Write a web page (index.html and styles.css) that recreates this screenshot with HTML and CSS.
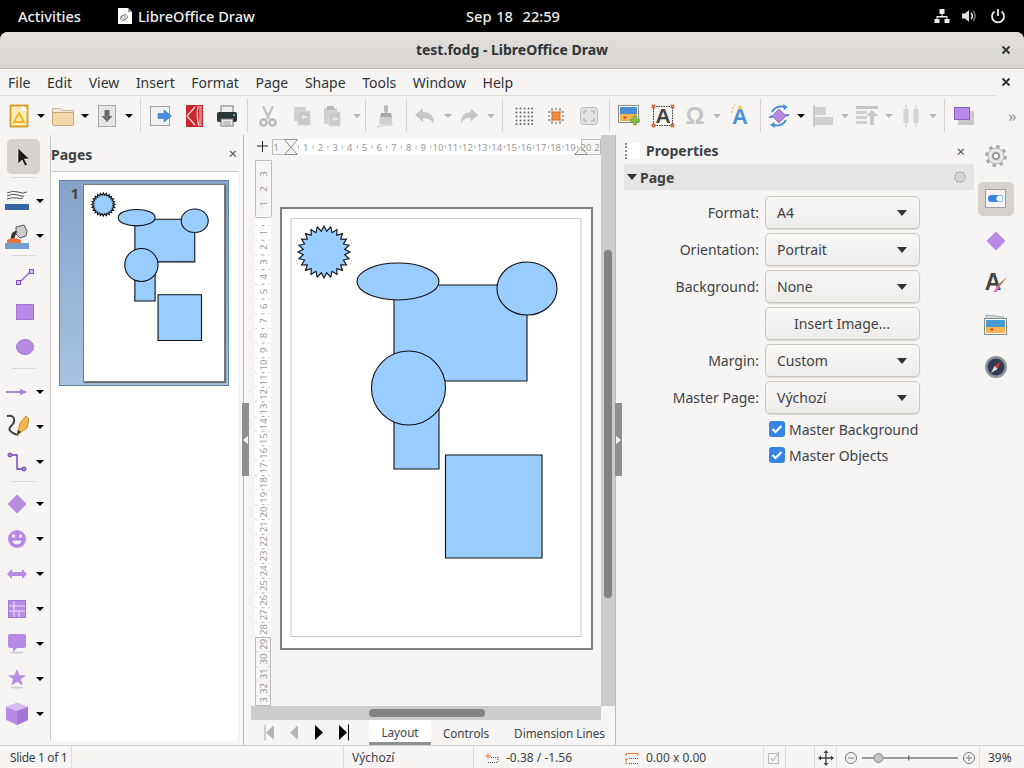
FILE: index.html
```html
<!DOCTYPE html>
<html lang="en">
<head>
<meta charset="utf-8">
<title>test.fodg - LibreOffice Draw</title>
<link rel="stylesheet" href="styles.css">
</head>
<body>
<header class="topbar">
  <div class="top-left">
    <span class="activities">Activities</span>
    <span class="appname">
      <svg width="16" height="18" viewBox="0 0 16 18"><path d="M1 1h10l4 4v12H1z" fill="#fff"/><path d="M11 1l4 4h-4z" fill="#999"/><path d="M4 10l4-3 3 3-3 3z" fill="none" stroke="#888"/><circle cx="6" cy="11" r="2.5" fill="none" stroke="#888"/></svg>
      LibreOffice Draw
    </span>
  </div>
  <div class="clock">Sep 18&nbsp; 22:59</div>
  <div class="tray">
    <svg width="16" height="16" viewBox="0 0 16 16"><path d="M5.500 1h5v5h-2v2h5v3h2v4h-5v-4h2V9.500h-9V11h2v4h-5v-4h2V8h5V6h-2z" fill="#eee"/></svg>
    <svg width="16" height="16" viewBox="0 0 16 16"><path d="M1 5.500h3L8 2v12l-4-3.500H1z" fill="#ddd"/><path d="M10 5a4 4 0 0 1 0 6" fill="none" stroke="#eee" stroke-width="1.500"/><path d="M12 3a7 7 0 0 1 0 10" fill="none" stroke="#777" stroke-width="1.500"/></svg>
    <svg width="16" height="16" viewBox="0 0 16 16"><path d="M8 1v7" stroke="#eee" stroke-width="1.800"/><path d="M4.500 3.500a6 6 0 1 0 7 0" fill="none" stroke="#eee" stroke-width="1.800"/></svg>
  </div>
</header>

<div class="window">
  <div class="titlebar">
    <span class="title">test.fodg - LibreOffice Draw</span>
    <svg class="x-btn" width="10" height="10" viewBox="0 0 10 10"><path d="M1.500 1.500l7 7M8.500 1.500l-7 7" stroke="#2e3436" stroke-width="1.800"/></svg>
  </div>

  <div class="menubar">
    <nav class="menu">
      <span>File</span><span>Edit</span><span>View</span><span>Insert</span><span>Format</span><span>Page</span><span>Shape</span><span>Tools</span><span>Window</span><span>Help</span>
    </nav>
    <svg class="x-btn" width="10" height="10" viewBox="0 0 10 10"><path d="M1.500 1.500l7 7M8.500 1.500l-7 7" stroke="#2e3436" stroke-width="1.800"/></svg>
  </div>

  <div class="toolbar">
    <div class="tb w22"><svg width="20" height="24" viewBox="0 0 20 24"><path d="M1.500 1.500h17v21h-17z" fill="#fdeeb8" stroke="#d89b2b" stroke-width="1.800"/><path d="M13 1.500l5.500 5.500h-5.500z" fill="#fff"/><path d="M10 9l5 9H5z" fill="none" stroke="#f4b01f" stroke-width="1.800"/></svg></div>
    <div class="ar w22"></div>
    <div class="tb w22"><svg width="24" height="20" viewBox="0 0 24 20"><path d="M1.500 18V2.500h8l2 2h11V18z" fill="#efe6d4" stroke="#c8b89c"/><path d="M1.500 6.500h21V18q0 1.500-1.500 1.500H3q-1.500 0-1.500-1.500z" fill="#f2d7ab" stroke="#c9a87c"/></svg></div>
    <div class="ar w22"></div>
    <div class="tb w22"><svg width="20" height="24" viewBox="0 0 20 24"><rect x="1.500" y="1.500" width="17" height="21" fill="#e6e6e6" stroke="#a8a8a8"/><path d="M7.500 6h5v6h3l-5.500 6-5.500-6h3z" fill="#6d6d6d"/></svg></div>
    <div class="ar w22"></div>
    <i class="sep"></i>
    <div class="tb w40"><svg width="24" height="22" viewBox="0 0 24 22"><rect x="1.500" y="1.500" width="19" height="19" fill="#eef0f2" stroke="#a0a0a0"/><path d="M9 8.500h6V5l7.500 6-7.500 6v-3.500H9z" fill="#4a90d9" stroke="#3476bb" stroke-width=".6"/></svg></div>
    <div class="tb w26"><svg width="17" height="22" viewBox="0 0 17 22"><rect width="17" height="22" fill="#c9272e"/><path d="M1 11L9 2M1 11l8 9M12 1q-2 10 1 20" fill="none" stroke="#f4e4e4" stroke-width="1.200"/><rect x="13" y="1" width="3" height="20" fill="#dc7c80"/></svg></div>
    <div class="tb w40"><svg width="22" height="22" viewBox="0 0 22 22"><rect x="5" y="1" width="12" height="7" fill="#f0f0f0" stroke="#777"/><rect x="1" y="7" width="20" height="10" rx="2" fill="#2e3436"/><rect x="5" y="14" width="12" height="7" fill="#eee" stroke="#777"/><rect x="17" y="9" width="2" height="2" fill="#3ab4e0"/><path d="M7 17h8M7 19h8" stroke="#999"/></svg></div>
    <i class="sep"></i>
    <div class="tb w40"><svg width="18" height="22" viewBox="0 0 18 22"><path d="M4 1l6 13M14 1L8 14" stroke="#c2c2c2" stroke-width="2.400"/><circle cx="4.500" cy="17.500" r="3.200" fill="none" stroke="#b5b5b5" stroke-width="2.200"/><circle cx="13.500" cy="17.500" r="3.200" fill="none" stroke="#b5b5b5" stroke-width="2.200"/></svg></div>
    <div class="tb w28"><svg width="18" height="20" viewBox="0 0 18 20"><rect x="1" y="1" width="12" height="14" fill="#d0d0d0"/><rect x="5" y="5" width="12" height="14" fill="#c8c8c8" stroke="#d8d8d8"/><path d="M8 11l3-3v2h3v2h-3v2z" fill="#e6e6e6"/></svg></div>
    <div class="tb w32"><svg width="18" height="22" viewBox="0 0 18 22"><rect x="1" y="3" width="13" height="16" rx="1" fill="#d0d0d0"/><rect x="4" y="1" width="7" height="4" fill="#b8b8b8"/><rect x="6" y="7" width="11" height="14" fill="#c8c8c8" stroke="#dadada"/><path d="M9 14l3-3v2h3v2h-3v2z" fill="#e6e6e6"/></svg></div>
    <div class="ar dis w17"></div>
    <i class="sep"></i>
    <div class="tb w40"><svg width="20" height="24" viewBox="0 0 20 24"><rect x="8" y="1" width="4" height="8" rx="2" fill="#bdbdbd"/><path d="M5 9h10l1 4H4z" fill="#a8a8a8"/><path d="M4 13h12v7H3z" fill="#cfcfcf"/><path d="M1 23q8-3 16-2" fill="none" stroke="#d8d8d8" stroke-width="2"/></svg></div>
    <i class="sep"></i>
    <div class="tb w36"><svg width="22" height="18" viewBox="0 0 22 18"><path d="M1 8L9 1v4q11 0 11 12q-3-6-11-6v4z" fill="#c6c6c6"/></svg></div>
    <div class="ar dis w10"></div>
    <div class="tb w32"><svg width="20" height="18" viewBox="0 0 22 18"><path d="M21 8L13 1v4Q2 5 2 17q3-6 11-6v4z" fill="#c6c6c6"/></svg></div>
    <div class="ar dis w12"></div>
    <i class="gap5"></i>
    <i class="sep"></i>
    <div class="tb w41"><svg width="18" height="18" viewBox="0 0 18 18"><g fill="#666"><circle cx="1.500" cy="1.500" r="1"/><circle cx="5.500" cy="1.500" r="1"/><circle cx="9.500" cy="1.500" r="1"/><circle cx="13.500" cy="1.500" r="1"/><circle cx="17" cy="1.500" r="1"/><circle cx="1.500" cy="5.500" r="1"/><circle cx="5.500" cy="5.500" r="1"/><circle cx="9.500" cy="5.500" r="1"/><circle cx="13.500" cy="5.500" r="1"/><circle cx="17" cy="5.500" r="1"/><circle cx="1.500" cy="9.500" r="1"/><circle cx="5.500" cy="9.500" r="1"/><circle cx="9.500" cy="9.500" r="1"/><circle cx="13.500" cy="9.500" r="1"/><circle cx="17" cy="9.500" r="1"/><circle cx="1.500" cy="13.500" r="1"/><circle cx="5.500" cy="13.500" r="1"/><circle cx="9.500" cy="13.500" r="1"/><circle cx="13.500" cy="13.500" r="1"/><circle cx="17" cy="13.500" r="1"/><circle cx="1.500" cy="17" r="1"/><circle cx="5.500" cy="17" r="1"/><circle cx="9.500" cy="17" r="1"/><circle cx="13.500" cy="17" r="1"/><circle cx="17" cy="17" r="1"/></g></svg></div>
    <div class="tb w24"><svg width="18" height="18" viewBox="0 0 18 18"><path d="M5 1v3M9 1v2M13 1v3M1 5h3M1 9h2M1 13h3M5 14v3M9 15v2M13 14v3M14 5h3M15 9h2M14 13h3" stroke="#666"/><rect x="5" y="5" width="8" height="8" fill="#f08a3c" stroke="#d26a20"/></svg></div>
    <div class="tb w41"><svg width="18" height="18" viewBox="0 0 18 18"><rect x=".5" y=".5" width="17" height="17" rx="3" fill="#e4e4e4" stroke="#bdbdbd"/><path d="M4 7V4h3M11 4h3v3M14 11v3h-3M7 14H4v-3" fill="none" stroke="#a8a8a8" stroke-width="1.200"/></svg></div>
    <i class="sep"></i>
    <div class="tb w40"><svg width="24" height="22" viewBox="0 0 24 22"><rect x=".5" y=".5" width="20" height="17" fill="#fff" stroke="#8a8a8a"/><rect x="2" y="2" width="17" height="7" fill="#4a8cd6"/><rect x="2" y="9" width="17" height="7" fill="#f2b552"/><path d="M7 11v3M5.500 12.500h3" stroke="#d33"/><path d="M15.500 11h3v3h3v3h-3v3h-3v-3h-3v-3h3z" fill="#86c24a" stroke="#5f9a2b" stroke-width=".6"/></svg></div>
    <div class="tb w26"><svg class="svgtext" width="24" height="24" viewBox="0 0 24 24"><rect x="2.500" y="2.500" width="19" height="19" fill="none" stroke="#333" stroke-dasharray="1.500 1"/><text x="12" y="19" class="ic-a" text-anchor="middle">A</text><g fill="#e87a45" stroke="#b8532a" stroke-width=".6"><rect x="1" y="1" width="3" height="3"/><rect x="20" y="1" width="3" height="3"/><rect x="1" y="20" width="3" height="3"/><rect x="20" y="20" width="3" height="3"/></g></svg></div>
    <div class="tb w37"><svg class="svgtext" width="24" height="30" viewBox="0 0 24 30"><text x="12" y="23" class="ic-omega" text-anchor="middle">Ω</text></svg></div>
    <div class="ar dis w8"></div>
    <div class="tb w36"><svg class="svgtext" width="22" height="28" viewBox="0 0 22 28"><text x="12" y="22" class="ic-fw" text-anchor="middle">A</text><path d="M12 3l1 2 2 .5-2 1-1 2-1-2-2-1 2-.5z" fill="#f2c230"/><path d="M4 6h2M3 10h2M6 3h1" stroke="#d9a520" stroke-width="1.200"/></svg></div>
    <i class="gap3"></i>
    <i class="sep"></i>
    <div class="tb w36"><svg width="24" height="24" viewBox="0 0 24 24"><path d="M12 5l7 7-7 7-7-7z" fill="#b78ae6" stroke="#9a6fd0"/><path d="M5 8q4-7 13-5" fill="none" stroke="#4a90d9" stroke-width="2"/><path d="M19 16q-4 7-13 5" fill="none" stroke="#4a90d9" stroke-width="2"/><path d="M16 0l5 3-4 3zM8 24l-5-3 4-3z" fill="#4a90d9"/><path d="M1 14l3-3 2 3zM23 10l-3 3-2-3z" fill="#4a90d9"/></svg></div>
    <div class="ar w8"></div>
    <div class="tb w36"><svg width="20" height="22" viewBox="0 0 20 22"><rect y="0" width="2" height="22" fill="#c8c8c8"/><rect x="2" y="2" width="11" height="8" fill="#d0d0d0"/><rect x="2" y="12" width="18" height="8" fill="#d0d0d0"/></svg></div>
    <div class="ar dis w8"></div>
    <div class="tb w36"><svg width="22" height="20" viewBox="0 0 22 20"><rect width="22" height="3" fill="#c4c4c4"/><path d="M0 5h11v3H0zM0 10h11v3H0zM0 15h11v3H0z" fill="#d0d0d0"/><path d="M16 4l6 6h-4v9h-4v-9h-4z" fill="#c8c8c8"/></svg></div>
    <div class="ar dis w8"></div>
    <div class="tb w36"><svg width="16" height="22" viewBox="0 0 16 22"><path d="M3 0v22M13 0v22" stroke="#c8c8c8"/><rect x="0.500" y="4" width="5" height="14" fill="#d4d4d4"/><rect x="10.500" y="4" width="5" height="14" fill="#d4d4d4"/></svg></div>
    <div class="ar dis w8"></div>
    <i class="gap7"></i>
    <i class="sep"></i>
    <div class="tb w38"><svg width="20" height="18" viewBox="0 0 20 18"><rect x="4" y="4" width="16" height="14" fill="#c8c8c8"/><rect x=".5" y=".5" width="15" height="12" fill="#b78ae6" stroke="#8a60c8"/></svg></div>
    <div class="more">»</div>
  </div>

  <main class="main">
    <aside class="leftbar">
      <div class="lt mid active"><svg width="14" height="20" viewBox="0 0 14 20"><path d="M2 1v16l4-4 3 6 2.500-1-3-6h5z" fill="#1a1a1a" stroke="#fff" stroke-width=".6"/></svg></div>
      <i class="hsep s1"></i>
      <div class="lt"><span class="lt-ic"><svg width="24" height="21" viewBox="0 0 24 21"><path d="M2 3q6-3 11-1t9 0M2 6q6-3 11-1t6 1M2 9q6-2 10-1t6 0" fill="none" stroke="#444" stroke-width=".9"/><rect y="14" width="24" height="6" fill="#3465a4"/></svg></span><span class="ar"></span></div>
      <div class="lt"><span class="lt-ic"><svg width="24" height="26" viewBox="0 0 24 26"><path d="M11 4l8-2 3 6-1 5-6 2-4-4z" fill="#ccc" stroke="#555"/><path d="M12 8q-5 0-6 5t2 6" fill="#333"/><path d="M2 17q6-4 14 0v3H2z" fill="#e8743c"/><rect y="20" width="24" height="6" fill="#729fcf"/></svg></span><span class="ar"></span></div>
      <i class="hsep s2"></i>
      <div class="lt mid"><svg width="20" height="20" viewBox="0 0 20 20"><path d="M4 16L16 4" stroke="#8b5fcb" stroke-width="1.300"/><rect x="1.500" y="13.500" width="4" height="4" fill="#d6bdf2" stroke="#7d4fc4"/><rect x="14.500" y="2.500" width="4" height="4" fill="#d6bdf2" stroke="#7d4fc4"/></svg></div>
      <div class="lt mid"><svg width="18" height="16" viewBox="0 0 18 16"><rect x=".5" y=".5" width="17" height="15" fill="#b78ae6" stroke="#a277d8"/></svg></div>
      <div class="lt mid"><svg width="18" height="16" viewBox="0 0 18 16"><ellipse cx="9" cy="8" rx="8.500" ry="7.500" fill="#b78ae6" stroke="#a277d8"/></svg></div>
      <i class="hsep s3"></i>
      <div class="lt"><span class="lt-ic"><svg width="22" height="8" viewBox="0 0 22 8"><path d="M0 4h15" stroke="#7a3fc0" stroke-width="1.200"/><path d="M14 1l7 3-7 3z" fill="#a985d8"/></svg></span><span class="ar"></span></div>
      <div class="lt"><span class="lt-ic"><svg width="24" height="26" viewBox="0 0 24 26"><path d="M2 2q6-1 7 3t-3 7q-4 4 2 7t4 1" fill="none" stroke="#444" stroke-width="2"/><path d="M12 21l3-12 6-7 3 3-2 9z" fill="#f2b552" stroke="#c98a26"/><path d="M12 21l1-5 3 2z" fill="#333"/></svg></span><span class="ar"></span></div>
      <div class="lt"><span class="lt-ic"><svg width="20" height="20" viewBox="0 0 20 20"><path d="M3 3h7v14h7" fill="none" stroke="#6f3fb8" stroke-width="1.400"/><circle cx="3" cy="3" r="2" fill="#a985d8" stroke="#6f3fb8"/><circle cx="17" cy="17" r="2" fill="#a985d8" stroke="#6f3fb8"/></svg></span><span class="ar"></span></div>
      <i class="hsep s4"></i>
      <div class="lt"><span class="lt-ic"><svg width="20" height="20" viewBox="0 0 20 20"><path d="M10 .5L19.500 10 10 19.500.5 10z" fill="#b78ae6"/></svg></span><span class="ar"></span></div>
      <div class="lt"><span class="lt-ic"><svg width="20" height="20" viewBox="0 0 20 20"><circle cx="10" cy="10" r="9" fill="#b78ae6"/><circle cx="6.500" cy="7" r="1.700" fill="#f3ecfb"/><circle cx="13.500" cy="7" r="1.700" fill="#f3ecfb"/><path d="M4.500 11h11q-1 5-5.500 5t-5.500-5z" fill="#f3ecfb" stroke="#7d4fc4" stroke-width=".6"/></svg></span><span class="ar"></span></div>
      <div class="lt"><span class="lt-ic"><svg width="20" height="12" viewBox="0 0 20 12"><path d="M0 6l5-5v3h10V1l5 5-5 5V8H5v3z" fill="#b78ae6"/></svg></span><span class="ar"></span></div>
      <div class="lt"><span class="lt-ic"><svg width="18" height="18" viewBox="0 0 18 18"><rect width="18" height="18" fill="#b78ae6"/><path d="M.5 6h17M.5 11h17M6 .5V18M11 11v7" stroke="#efe5fa"/><rect x=".5" y=".5" width="17" height="17" fill="none" stroke="#a277d8"/></svg></span><span class="ar"></span></div>
      <div class="lt"><span class="lt-ic"><svg width="18" height="20" viewBox="0 0 18 20"><path d="M2 0h14q2 0 2 2v10q0 2-2 2H9l-4 4v-4H2q-2 0-2-2V2q0-2 2-2z" fill="#b78ae6"/><ellipse cx="9" cy="18.500" rx="7" ry="1" fill="#ccc"/></svg></span><span class="ar"></span></div>
      <div class="lt"><span class="lt-ic"><svg width="18" height="20" viewBox="0 0 18 20"><path d="M9 0l2.500 6.200H18l-5.200 4 2 6.300L9 12.800 3.200 16.500l2-6.300L0 6.200h6.500z" fill="#b78ae6"/><ellipse cx="9" cy="18.500" rx="6" ry="1" fill="#ccc"/></svg></span><span class="ar"></span></div>
      <div class="lt"><span class="lt-ic"><svg width="22" height="22" viewBox="0 0 22 22"><path d="M11 0l11 4v13l-11 5L0 17V4z" fill="#b78ae6"/><path d="M11 0l11 4-11 4L0 4z" fill="#d6bdf2"/><path d="M11 8l11-4v13l-11 5z" fill="#a277d8"/></svg></span><span class="ar"></span></div>
    </aside>

    <section class="pages">
      <div class="panel-head"><span class="panel-title">Pages</span><span class="close">×</span></div>
      <div class="page-list">
        <div class="slide">
          <span class="slide-no">1</span>
          <svg class="thumb" viewBox="0 0 311 441" preserveAspectRatio="none">
            <defs>
              <symbol id="drawing" viewBox="0 0 311 441" preserveAspectRatio="none">
                <g class="shapes">
                  <polygon transform="translate(43 44)" points="26,0 20.8,2.74 25.1,6.73 19.4,8.04 22.5,13 16.66,12.78 18.38,18.38 12.78,16.66 13,22.5 8.04,19.4 6.73,25.1 2.74,20.8 0,26 -2.74,20.8 -6.73,25.1 -8.04,19.4 -13,22.5 -12.78,16.66 -18.38,18.38 -16.66,12.78 -22.5,13 -19.4,8.04 -25.1,6.73 -20.8,2.74 -26,0 -20.8,-2.74 -25.1,-6.73 -19.4,-8.04 -22.5,-13 -16.66,-12.78 -18.38,-18.38 -12.78,-16.66 -13,-22.5 -8.04,-19.4 -6.73,-25.1 -2.74,-20.8 0,-26 2.74,-20.8 6.73,-25.1 8.04,-19.4 13,-22.5 12.78,-16.66 18.38,-18.38 16.66,-12.78 22.5,-13 19.4,-8.04 25.1,-6.73 20.8,-2.74"/>
                  <polygon points="113,77 246,77 246,173 158,173 158,261 113,261"/>
                  <ellipse cx="117" cy="73.500" rx="41" ry="18.500"/>
                  <ellipse cx="246" cy="80.500" rx="30" ry="26.500"/>
                  <circle cx="127.500" cy="180" r="37"/>
                  <rect x="164.500" y="247" width="96.500" height="103"/>
                </g>
              </symbol>
            </defs>
            <use href="#drawing" width="311" height="441"/>
          </svg>
        </div>
      </div>
    </section>

    <section class="center">
      <div class="workspace">
        <svg class="canvas" width="350" height="571" viewBox="251 135 350 571">
          <!-- ruler corner -->
          <path d="M257 146h11M262.500 141v11" stroke="#222"/>
          <!-- horizontal ruler -->
          <rect x="297" y="139" width="284" height="16" fill="#fff"/>
          <path d="M272.500 139.500h19v15h-19zM581.500 139.500h19v15h-19z" fill="#f6f5f4" stroke="#bcbcbc"/>
          <path d="M284.500 139.500h13l-6.500 8 6.500 7h-13l6.500-7z" fill="#f6f5f4" stroke="#8f8f8f"/>
          <path d="M574.500 154.500l6.500-7 6.500 7z" fill="#f6f5f4" stroke="#8f8f8f"/>
          <line x1="298" y1="147" x2="580" y2="147" stroke="#aaa" stroke-width="3" stroke-dasharray="1 13.700"/>
          <g class="ruler-h">
            <text x="276" y="151">1</text><text x="305.700" y="151">1</text><text x="320.400" y="151">2</text><text x="335.100" y="151">3</text><text x="349.800" y="151">4</text><text x="364.500" y="151">5</text><text x="379.200" y="151">6</text><text x="393.900" y="151">7</text><text x="408.600" y="151">8</text><text x="423.300" y="151">9</text><text x="438" y="151">10</text><text x="452.700" y="151">11</text><text x="467.400" y="151">12</text><text x="482.100" y="151">13</text><text x="496.800" y="151">14</text><text x="511.500" y="151">15</text><text x="526.200" y="151">16</text><text x="540.900" y="151">17</text><text x="555.600" y="151">18</text><text x="570.300" y="151">19</text><text x="586" y="151">20</text><text x="597" y="151">2</text>
          </g>
          <!-- vertical ruler -->
          <rect x="255" y="218" width="16" height="419" fill="#fff"/>
          <path d="M255.500 160.500h16v55q0 2-2 2h-12q-2 0-2-2zM255.500 637.500h15v68h-15z" fill="#f6f5f4" stroke="#bcbcbc"/>
          <line x1="263" y1="225" x2="263" y2="637" stroke="#aaa" stroke-width="3" stroke-dasharray="1 13.700"/>
          <line x1="256" y1="225" x2="256" y2="705" stroke="#aaa" stroke-dasharray="1 13.700"/>
          <line x1="269" y1="225" x2="269" y2="705" stroke="#aaa" stroke-dasharray="1 13.700"/>
          <g class="ruler-v">
            <text transform="translate(263 174) rotate(-90)">3</text><text transform="translate(263 189) rotate(-90)">2</text><text transform="translate(263 203.500) rotate(-90)">1</text>
            <text transform="translate(263 232.700) rotate(-90)">1</text><text transform="translate(263 247.400) rotate(-90)">2</text><text transform="translate(263 262.100) rotate(-90)">3</text><text transform="translate(263 276.800) rotate(-90)">4</text><text transform="translate(263 291.500) rotate(-90)">5</text><text transform="translate(263 306.200) rotate(-90)">6</text><text transform="translate(263 320.900) rotate(-90)">7</text><text transform="translate(263 335.600) rotate(-90)">8</text><text transform="translate(263 350.300) rotate(-90)">9</text><text transform="translate(263 365) rotate(-90)">10</text><text transform="translate(263 379.700) rotate(-90)">11</text><text transform="translate(263 394.400) rotate(-90)">12</text><text transform="translate(263 409.100) rotate(-90)">13</text><text transform="translate(263 423.800) rotate(-90)">14</text><text transform="translate(263 438.500) rotate(-90)">15</text><text transform="translate(263 453.200) rotate(-90)">16</text><text transform="translate(263 467.900) rotate(-90)">17</text><text transform="translate(263 482.600) rotate(-90)">18</text><text transform="translate(263 497.300) rotate(-90)">19</text><text transform="translate(263 512) rotate(-90)">20</text><text transform="translate(263 526.700) rotate(-90)">21</text><text transform="translate(263 541.400) rotate(-90)">22</text><text transform="translate(263 556.100) rotate(-90)">23</text><text transform="translate(263 570.800) rotate(-90)">24</text><text transform="translate(263 585.500) rotate(-90)">25</text><text transform="translate(263 600.200) rotate(-90)">26</text><text transform="translate(263 614.900) rotate(-90)">27</text><text transform="translate(263 629.600) rotate(-90)">28</text><text transform="translate(263 644.300) rotate(-90)">29</text><text transform="translate(263 659) rotate(-90)">30</text><text transform="translate(263 673.700) rotate(-90)">31</text><text transform="translate(263 688.400) rotate(-90)">32</text><text transform="translate(263 700) rotate(-90)">3</text>
          </g>
          <!-- page -->
          <rect x="281" y="208" width="311" height="441" fill="#fff" stroke="#7f7f7f" stroke-width="2"/>
          <rect x="291" y="218.500" width="290" height="418" fill="none" stroke="#c8c8c8"/>
          <use href="#drawing" x="281" y="208" width="311" height="441"/>
        </svg>
        <div class="vscroll"><div class="sthumb"></div></div>
      </div>
      <div class="hrow">
        <div class="hscroll"><div class="sthumb"></div></div>
      </div>
      <div class="tabs">
        <div class="tabnav">
          <svg width="125" height="25" viewBox="244 720 125 25">
            <path d="M265 724.500v16" stroke="#aaa"/><path d="M274 725v15l-8-7.500z" fill="#b5b5b5"/>
            <path d="M298 725v15l-8-7.500z" fill="#b5b5b5"/>
            <path d="M315 725v15l8-7.500z" fill="#000"/>
            <path d="M339 725v15l8-7.500z" fill="#000"/><path d="M348.500 724.500v16" stroke="#000"/>
          </svg>
        </div>
        <span class="tab on">Layout</span>
        <span class="tab t2">Controls</span>
        <span class="tab t3">Dimension Lines</span>
      </div>
    </section>

    <section class="props">
      <div class="props-head">
        <span class="grip"></span>
        <span class="panel-title">Properties</span>
        <span class="close">×</span>
      </div>
      <div class="deck">
        <i class="deck-caret"></i><span class="deck-title">Page</span>
        <svg width="14" height="14" viewBox="0 0 14 14"><circle cx="7" cy="7" r="5" fill="#e6e5e3" stroke="#b5b5b5" stroke-width="2" stroke-dasharray="2 1.150"/><circle cx="7" cy="7" r="4.300" fill="#e0dfdd" stroke="#bbb"/><circle cx="7" cy="7" r="1.500" fill="#f0f0f0" stroke="#bbb"/></svg>
      </div>
      <div class="form">
        <label>Format:</label><div class="sel"><span>A4</span><i class="caret"></i></div>
        <label>Orientation:</label><div class="sel"><span>Portrait</span><i class="caret"></i></div>
        <label>Background:</label><div class="sel"><span>None</span><i class="caret"></i></div>
        <label></label><div class="sel btn">Insert Image...</div>
        <label>Margin:</label><div class="sel"><span>Custom</span><i class="caret"></i></div>
        <label>Master Page:</label><div class="sel"><span>Výchozí</span><i class="caret"></i></div>
        <div class="checks">
          <div class="check"><svg width="16" height="16" viewBox="0 0 16 16"><rect width="16" height="16" rx="3" fill="#3584e4"/><path d="M3.500 8l3 3 6-6" fill="none" stroke="#fff" stroke-width="2.200"/></svg>Master Background</div>
          <div class="check"><svg width="16" height="16" viewBox="0 0 16 16"><rect width="16" height="16" rx="3" fill="#3584e4"/><path d="M3.500 8l3 3 6-6" fill="none" stroke="#fff" stroke-width="2.200"/></svg>Master Objects</div>
        </div>
      </div>
    </section>

    <aside class="sidetabs">
      <div class="st"><svg width="24" height="24" viewBox="0 0 24 24"><circle cx="12" cy="12" r="9.500" fill="none" stroke="#aaa" stroke-width="3" stroke-dasharray="3.500 3.960"/><circle cx="12" cy="12" r="8" fill="#e8e8e8" stroke="#b0b0b0"/><circle cx="12" cy="12" r="3.200" fill="#f8f8f8" stroke="#999" stroke-width="2"/></svg></div>
      <div class="st active"><svg width="22" height="20" viewBox="0 0 22 20"><rect x=".5" y=".5" width="20" height="18" fill="#f3f3f3" stroke="#a0a0a0"/><rect x="3" y="6" width="15" height="7" rx="3.500" fill="#3584e4"/><circle cx="14.500" cy="9.500" r="3" fill="#fff"/></svg></div>
      <div class="st"><svg width="20" height="20" viewBox="0 0 20 20"><path d="M10 .5L19.500 10 10 19.500.5 10z" fill="#b78ae6"/></svg></div>
      <div class="st"><svg class="svgtext" width="24" height="30" viewBox="0 0 24 30"><text x="9" y="22" class="ic-side" text-anchor="middle">A</text><path d="M23 9l-7 9-2-1.500z" fill="#b8742a"/><path d="M14 17l2 1.500-3 5q-2 1-4 .5 3-3 5-7z" fill="#d96fc0"/></svg></div>
      <div class="st"><svg width="24" height="22" viewBox="0 0 24 22"><path d="M2 1l18 2v3H2z" fill="#cfe0f0" stroke="#9aa"/><rect x=".5" y="4.500" width="22" height="16" fill="#fff" stroke="#888"/><rect x="2" y="6" width="19" height="7" fill="#4a9ad6"/><rect x="2" y="13" width="19" height="6" fill="#f2b552"/><path d="M8 14v3M6.500 15.500h3" stroke="#d33"/></svg></div>
      <div class="st"><svg width="24" height="24" viewBox="0 0 24 24"><circle cx="12" cy="12" r="11" fill="#8f949a"/><circle cx="12" cy="12" r="8.500" fill="#2f3b52"/><path d="M17 6l-3.500 8-3-3z" fill="#d33"/><path d="M7 18l3.500-7 3 3z" fill="#e8e8e8"/></svg></div>
    </aside>

    <div class="handle h-left"><i class="tri-l"></i></div>
    <div class="handle h-right"><i class="tri-r"></i></div>
  </main>

  <footer class="status">
    <div class="cell c1">Slide 1 of 1</div>
    <div class="cell c2"></div>
    <div class="cell c3">Výchozí</div>
    <div class="cell c4"><svg width="14" height="12" viewBox="0 0 14 12"><path d="M3 1v6M0 4h6" stroke="#e9772e"/><path d="M6 5.500h7M3 10.500h10M13 5v6" stroke="#555" stroke-dasharray="1 1"/></svg><span>-0.38 / -1.56</span></div>
    <div class="cell c5"><svg width="14" height="12" viewBox="0 0 14 12"><path d="M1 1.500h12M1 1v3M13 1v3M1 7v5M0 7h3M0 12h3" stroke="#e9772e" fill="none"/><path d="M4 6.500h9M4 11.500h9" stroke="#555" stroke-dasharray="1 1"/></svg><span>0.00 x 0.00</span></div>
    <div class="cell c6"><svg width="14" height="14" viewBox="0 0 14 14"><path d="M1.500 2.500h10v10h-10z" fill="none" stroke="#bbb"/><path d="M4 7l2 3 6-9" fill="none" stroke="#bbb" stroke-width="1.200"/></svg></div>
    <div class="cell c7"></div>
    <div class="cell c8"><svg width="16" height="16" viewBox="0 0 16 16"><path d="M8 1v14M1 8h14" stroke="#444" stroke-width="1.300"/><path d="M8 0l2.500 3h-5zM8 16l-2.500-3h5zM0 8l3-2.500v5zM16 8l-3-2.500v5z" fill="#444"/></svg></div>
    <div class="cell c9">
      <svg width="143" height="16" viewBox="0 0 143 16"><circle cx="14" cy="8" r="5.500" fill="none" stroke="#777"/><path d="M11 8h6" stroke="#777"/><path d="M25 8h96" stroke="#999" stroke-width="2"/><rect x="71" y="5.500" width="1.500" height="5" fill="#777"/><circle cx="41.500" cy="8" r="4.500" fill="#c4c4c4" stroke="#888"/><circle cx="132" cy="8" r="5.500" fill="none" stroke="#777"/><path d="M129 8h6M132 5v6" stroke="#777"/></svg>
    </div>
    <div class="cell c10">39%</div>
  </footer>
</div>
</body>
</html>
```

FILE: styles.css
```css
* { box-sizing: border-box; }
html, body { margin: 0; height: 100%; overflow: hidden; }
body {
  width: 1024px; height: 768px; background: #000; color: #2e3436;
  font-family: "Noto Sans", "DejaVu Sans", sans-serif; font-size: 14px;
  display: flex; flex-direction: column;
}
svg { display: block; flex: none; }
i { font-style: normal; display: block; }

/* GNOME top bar */
.topbar { height: 32px; flex: none; display: flex; align-items: center; position: relative; color: #eeeeec; font-size: 14.6px; font-weight: 500; }
.top-left { display: flex; align-items: center; padding-left: 18px; }
.activities { width: 100px; }
.appname { display: flex; align-items: center; gap: 5px; margin-left: -1px; }
.clock { position: absolute; left: 466px; top: 6px; word-spacing: 1px; }
.tray { margin-left: auto; display: flex; gap: 11px; padding-right: 18px; align-items: center; }
.tray svg:last-child { margin-left: 2px; }

/* Window */
.window { flex: 1; display: flex; flex-direction: column; background: #f6f5f4; border-radius: 8px 8px 0 0; min-height: 0; }
.titlebar { height: 37px; flex: none; display: flex; align-items: center; justify-content: center; position: relative; background: linear-gradient(#e2dfdc, #d9d6d2); border-bottom: 1px solid #bdb8b1; border-radius: 8px 8px 0 0; padding-bottom: 2px; }
.title { font-weight: 700; font-size: 14px; }
.x-btn { position: absolute; right: 13px; top: 13px; }
.menubar { height: 27px; flex: none; position: relative; padding-right: 28px; }
.menu { height: 27px; display: flex; gap: 16.6px; align-items: center; padding-left: 8px; border-bottom: 1px solid #dedcd9; font-size: 14px; }
.menubar .x-btn { top: 8px; }
.toolbar { height: 39px; flex: none; display: flex; align-items: center; padding-left: 8px; }
.tb, .ar { height: 39px; display: flex; align-items: center; justify-content: center; flex: none; }
.ar::before { content: ""; display: block; border-style: solid; border-width: 4px 4px 0; border-color: #000 transparent transparent; }
.ar.dis::before { border-top-color: #b5b5b5; }
.sep { width: 1px; height: 33px; background: #d5d3d0; flex: none; }
.w8 { width: 8px; } .w10 { width: 10px; } .w12 { width: 12px; } .w17 { width: 17px; }
.w22 { width: 22px; } .w24 { width: 24px; } .w26 { width: 26px; } .w28 { width: 28px; }
.w32 { width: 32px; } .w36 { width: 36px; } .w37 { width: 37px; } .w38 { width: 38px; }
.w40 { width: 40px; } .w41 { width: 41px; }
.gap3 { width: 3px; flex: none; } .gap5 { width: 5px; flex: none; } .gap7 { width: 7px; flex: none; }
.more { margin-left: auto; width: 16px; color: #999; font-size: 17px; line-height: 39px; }
.svgtext text { font-family: "Liberation Sans", sans-serif; font-weight: 700; }
.ic-a { font-size: 21px; fill: #444; }
.ic-omega { font-size: 23px; fill: #c4c4c4; }
.ic-fw { font-size: 22px; fill: #4a90d9; }
.ic-side { font-size: 23px; fill: #444; }

/* Main */
.main { height: 610px; flex: none; display: flex; position: relative; }
.leftbar { width: 51px; flex: none; height: 605px; border-right: 1px solid #c8c6c3; padding-top: 4px; display: flex; flex-direction: column; }
.lt { height: 35px; flex: none; display: flex; align-items: center; }
.lt-ic { width: 34px; display: flex; justify-content: center; }
.lt .ar { width: 11px; height: 35px; }
.lt.mid { justify-content: center; width: 49px; }
.lt.active { width: 33px; margin-left: 7px; background: #d6d2cd; border-radius: 5px; padding-right: 1px; }
.hsep { height: 1px; width: 23px; margin-left: 12px; background: #d9d7d4; flex: none; }
.s1 { margin-top: 3px; margin-bottom: 5px; }
.s2 { margin-top: 2px; margin-bottom: 3px; }
.s3 { margin-top: 4px; margin-bottom: 5px; }
.s4 { margin-top: 2px; margin-bottom: 4px; }

.pages { width: 192px; flex: none; display: flex; flex-direction: column; padding-right: 5px; }
.panel-head { height: 37px; flex: none; display: flex; align-items: center; justify-content: space-between; border-bottom: 1px solid #cfcdca; padding-top: 3px; }
.panel-title { font-weight: 700; font-size: 14px; color: #3d4245; }
.close { font-size: 15px; color: #555; padding-right: 1px; }
.pages .close { padding-right: 0; margin-right: 1px; margin-bottom: 4px; }
.page-list { height: 569px; flex: none; background: #fff; border-radius: 0 0 4px 0; padding: 8px 9px 0 8px; }
.slide { height: 206px; display: flex; padding: 4px 4px 5px 0; background: linear-gradient(#86a3c7, #a8c3e2); border: 1px solid #5f82ab; }
.slide-no { width: 25px; font-weight: 700; font-size: 15px; text-align: right; color: #454545; padding-right: 5px; line-height: 14px; padding-top: 1px; }
.thumb { width: 140px; height: 196px; background: #fff; box-shadow: 0 0 0 1px #7a7a7a, 1px 1px 1px 1px #6a6a6a; }
.shapes > * { fill: #99ccff; stroke: #111; stroke-width: 1.100; vector-effect: non-scaling-stroke; }

.center { width: 373px; flex: none; display: flex; flex-direction: column; border-left: 1px solid #bdbbb8; border-right: 1px solid #bdbbb8; padding-left: 7px; }
.workspace { height: 571px; flex: none; display: flex; }
.canvas { width: 350px; height: 571px; overflow: hidden; }
.ruler-h text, .ruler-v text { font-size: 9.5px; fill: #999; text-anchor: middle; }
.ruler-v text { dominant-baseline: central; }
.vscroll { width: 14px; flex: none; background: #cccccc; padding: 115px 3px 108px; display: flex; }
.vscroll .sthumb { flex: 1; }
.sthumb { background: #7f8383; border-radius: 4px; }
.hrow { height: 14px; flex: none; width: 350px; }
.hscroll { height: 14px; background: #cccccc; padding: 3px 116px 3px 118px; }
.hscroll .sthumb { height: 8px; }
.tabs { height: 25px; flex: none; display: flex; margin-left: -7px; font-size: 11.7px; color: #3d4245; }
.tabnav { width: 125px; flex: none; }
.tab { display: flex; align-items: center; justify-content: center; height: 25px; }
.tab.on { width: 62px; background: #fff; border-bottom: 3px solid #8f9191; padding-top: 2px; }
.t2 { width: 70px; } .t3 { width: 113px; padding-left: 4px; white-space: nowrap; }

.handle { position: absolute; top: 268px; width: 7px; height: 73px; background: #8f9191; display: flex; align-items: center; justify-content: center; }
.h-left { left: 242px; }
.h-right { left: 615px; }
.tri-l { border-style: solid; border-width: 4px 5px 4px 0; border-color: transparent #fff transparent transparent; }
.tri-r { border-style: solid; border-width: 4px 0 4px 5px; border-color: transparent transparent transparent #fff; }

.props { width: 362px; flex: none; padding-left: 8px; padding-right: 4px; }
.props-head { height: 29px; display: flex; align-items: center; padding-left: 1px; padding-top: 2px; }
.grip { width: 15px; height: 16px; background: #fff; margin-right: 6px; border-left: 2px dotted #888; }
.props-head .close { margin-left: auto; padding-right: 9px; }
.deck { height: 26px; background: #e6e5e3; display: flex; align-items: center; padding: 0 7px 0 3px; }
.deck-caret { border-style: solid; border-width: 6px 5.500px 0; border-color: #2e3436 transparent transparent; margin-right: 3px; }
.deck-title { font-weight: 700; font-size: 14px; flex: 1; color: #3d4245; }
.form { display: grid; grid-template-columns: 135px 155px; column-gap: 6px; row-gap: 4px; padding-top: 6px; }
.form label { display: flex; align-items: center; justify-content: flex-end; color: #3d4245; }
.sel { height: 33px; border: 1px solid #cdc7c2; border-radius: 5px; background: linear-gradient(#f8f7f6, #eeecea); box-shadow: 0 1px 1px rgba(0,0,0,.12); display: flex; align-items: center; justify-content: space-between; padding: 0 12px 0 11px; color: #3d4245; }
.sel.btn { justify-content: center; }
.caret { border-style: solid; border-width: 6px 5.500px 0; border-color: #2e3436 transparent transparent; }
.checks { grid-column: 2; margin-top: -2px; padding-left: 4px; }
.check { height: 26px; display: flex; align-items: center; gap: 4px; color: #3d4245; white-space: nowrap; }

.sidetabs { width: 46px; flex: none; display: flex; flex-direction: column; }
.st { width: 36px; height: 42px; display: flex; align-items: center; justify-content: center; }
.st.active { height: 34px; margin: 5px 0 4px; background: #d6d2cd; border-radius: 5px; }

/* Status bar */
.status { height: 23px; flex: none; border-top: 1px solid #cfcdca; display: flex; font-size: 12px; color: #3d4245; }
.cell { height: 22px; display: flex; align-items: center; flex: none; border-right: 1px solid #dedcd9; padding-top: 1px; white-space: nowrap; }
.c1 { width: 72px; padding-left: 10px; letter-spacing: -.35px; }
.c2 { width: 272px; }
.c3 { width: 130px; padding-left: 8px; }
.c4 { width: 151px; padding-left: 11px; gap: 7px; border-right: 0; }
.c5 { width: 139px; gap: 7px; }
.c6 { width: 22px; padding-left: 3px; }
.c7 { width: 29px; }
.c8 { width: 22px; padding-left: 3px; }
.c9 { width: 143px; }
.c10 { flex: 1; padding-left: 8px; border-right: 0; }
```
